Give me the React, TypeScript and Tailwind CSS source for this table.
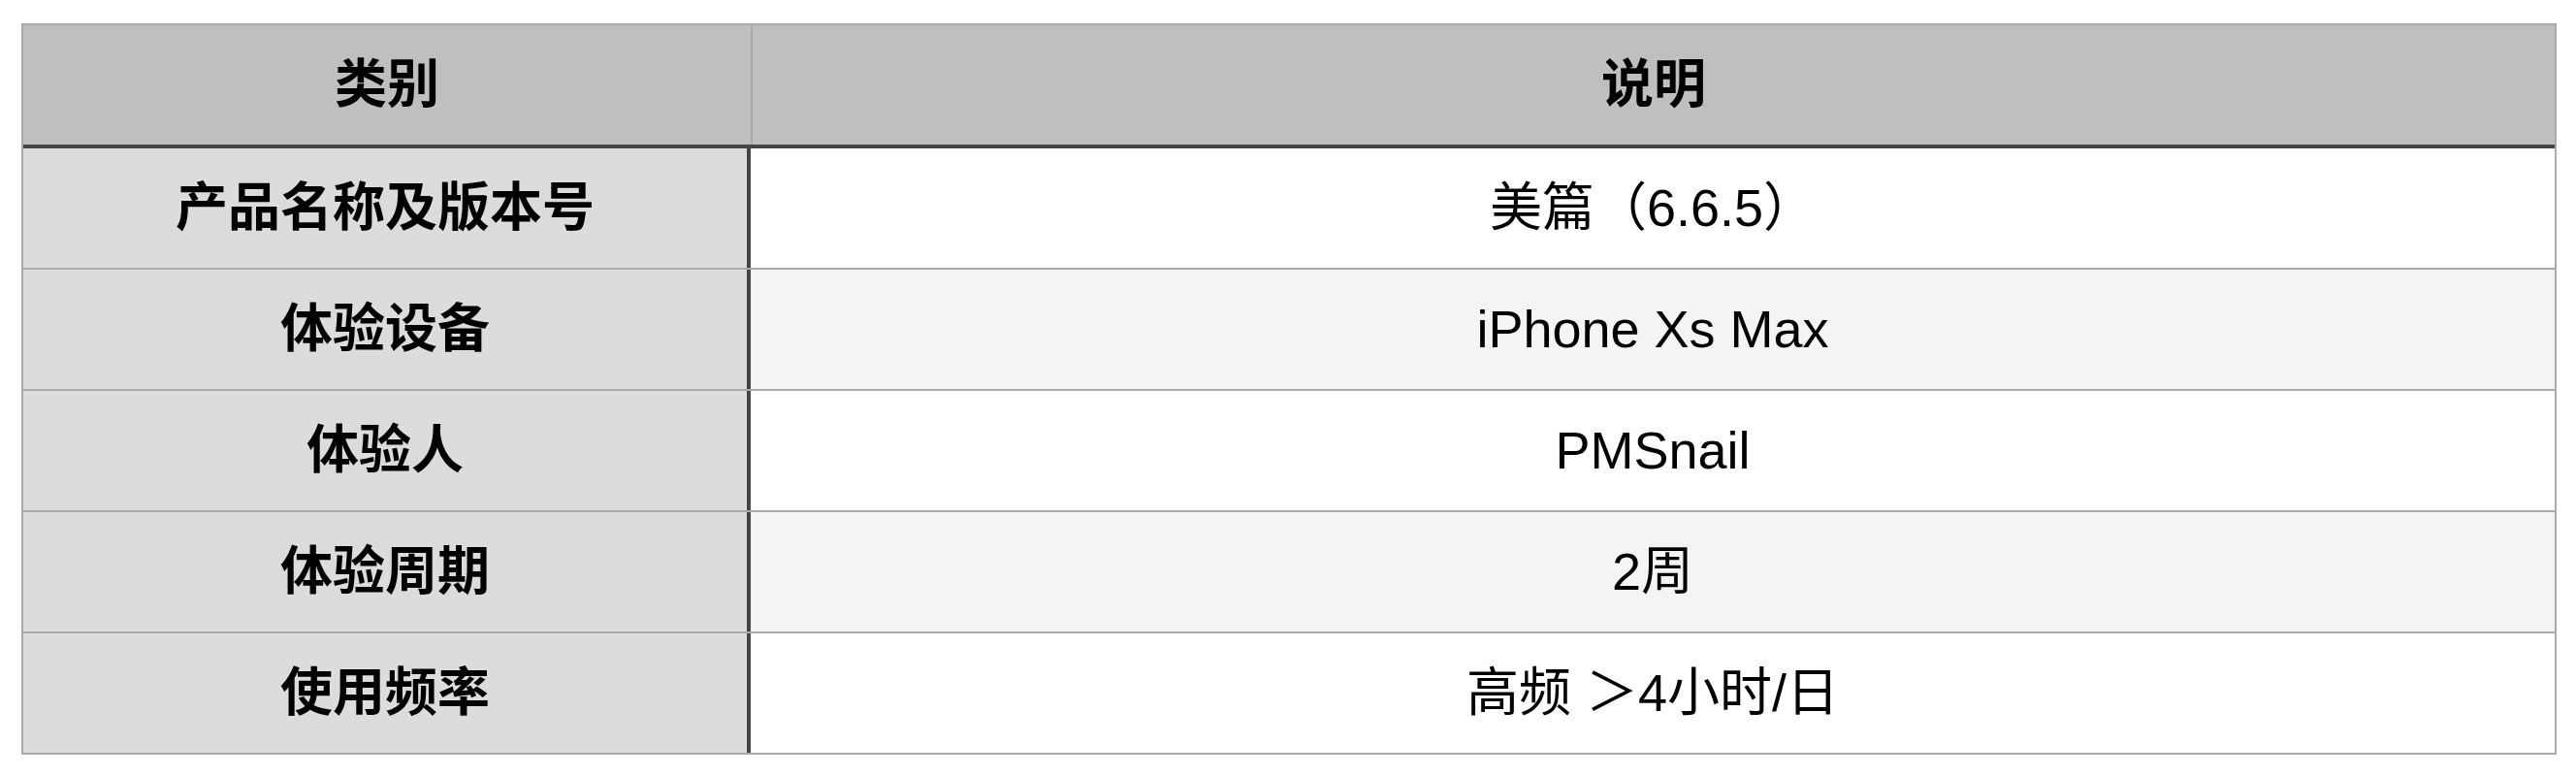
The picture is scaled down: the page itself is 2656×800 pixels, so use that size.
import React from 'react';

const rows = [
    { label: "产品名称及版本号", value: "美篇（6.6.5）" },
    { label: "体验设备", value: "iPhone Xs Max" },
    { label: "体验人", value: "PMSnail" },
    { label: "体验周期", value: "2周" },
    { label: "使用频率", value: "高频 ＞4小时/日" },
];

const font = { fontFamily: '"Liberation Sans", "Noto Sans CJK SC", sans-serif' };

const App = () => {
    return (
        <div className="w-[2656px] h-[800px] bg-white pt-[24px] pl-[22px] text-black" style={font}>
            <div className="w-[2614px] border-t-2 border-l-2 border-r-2 border-[#aaaaaa]">
                {/* Header */}
                <div className="flex h-[127px] bg-[#bebfbe] border-b-4 border-[#444444] text-[54px] font-bold">
                    <div className="w-[752px] flex items-center justify-center border-r-2 border-[#aaaaaa]">类别</div>
                    <div className="flex-1 flex items-center justify-center">说明</div>
                </div>

                {/* Body rows */}
                {rows.map((row, index) => (
                    <div
                        key={index}
                        className={`flex h-[125px] border-b-2 border-[#aaaaaa] text-[54px] ${index % 2 === 1 ? 'bg-[#f4f4f4]' : 'bg-white'}`}
                    >
                        <div className="w-[750px] flex items-center justify-center bg-[#dcdcdc] font-bold border-r-4 border-[#444444]">
                            {row.label}
                        </div>
                        <div className="flex-1 flex items-center justify-center">{row.value}</div>
                    </div>
                ))}
            </div>
        </div>
    );
};

export default App;
